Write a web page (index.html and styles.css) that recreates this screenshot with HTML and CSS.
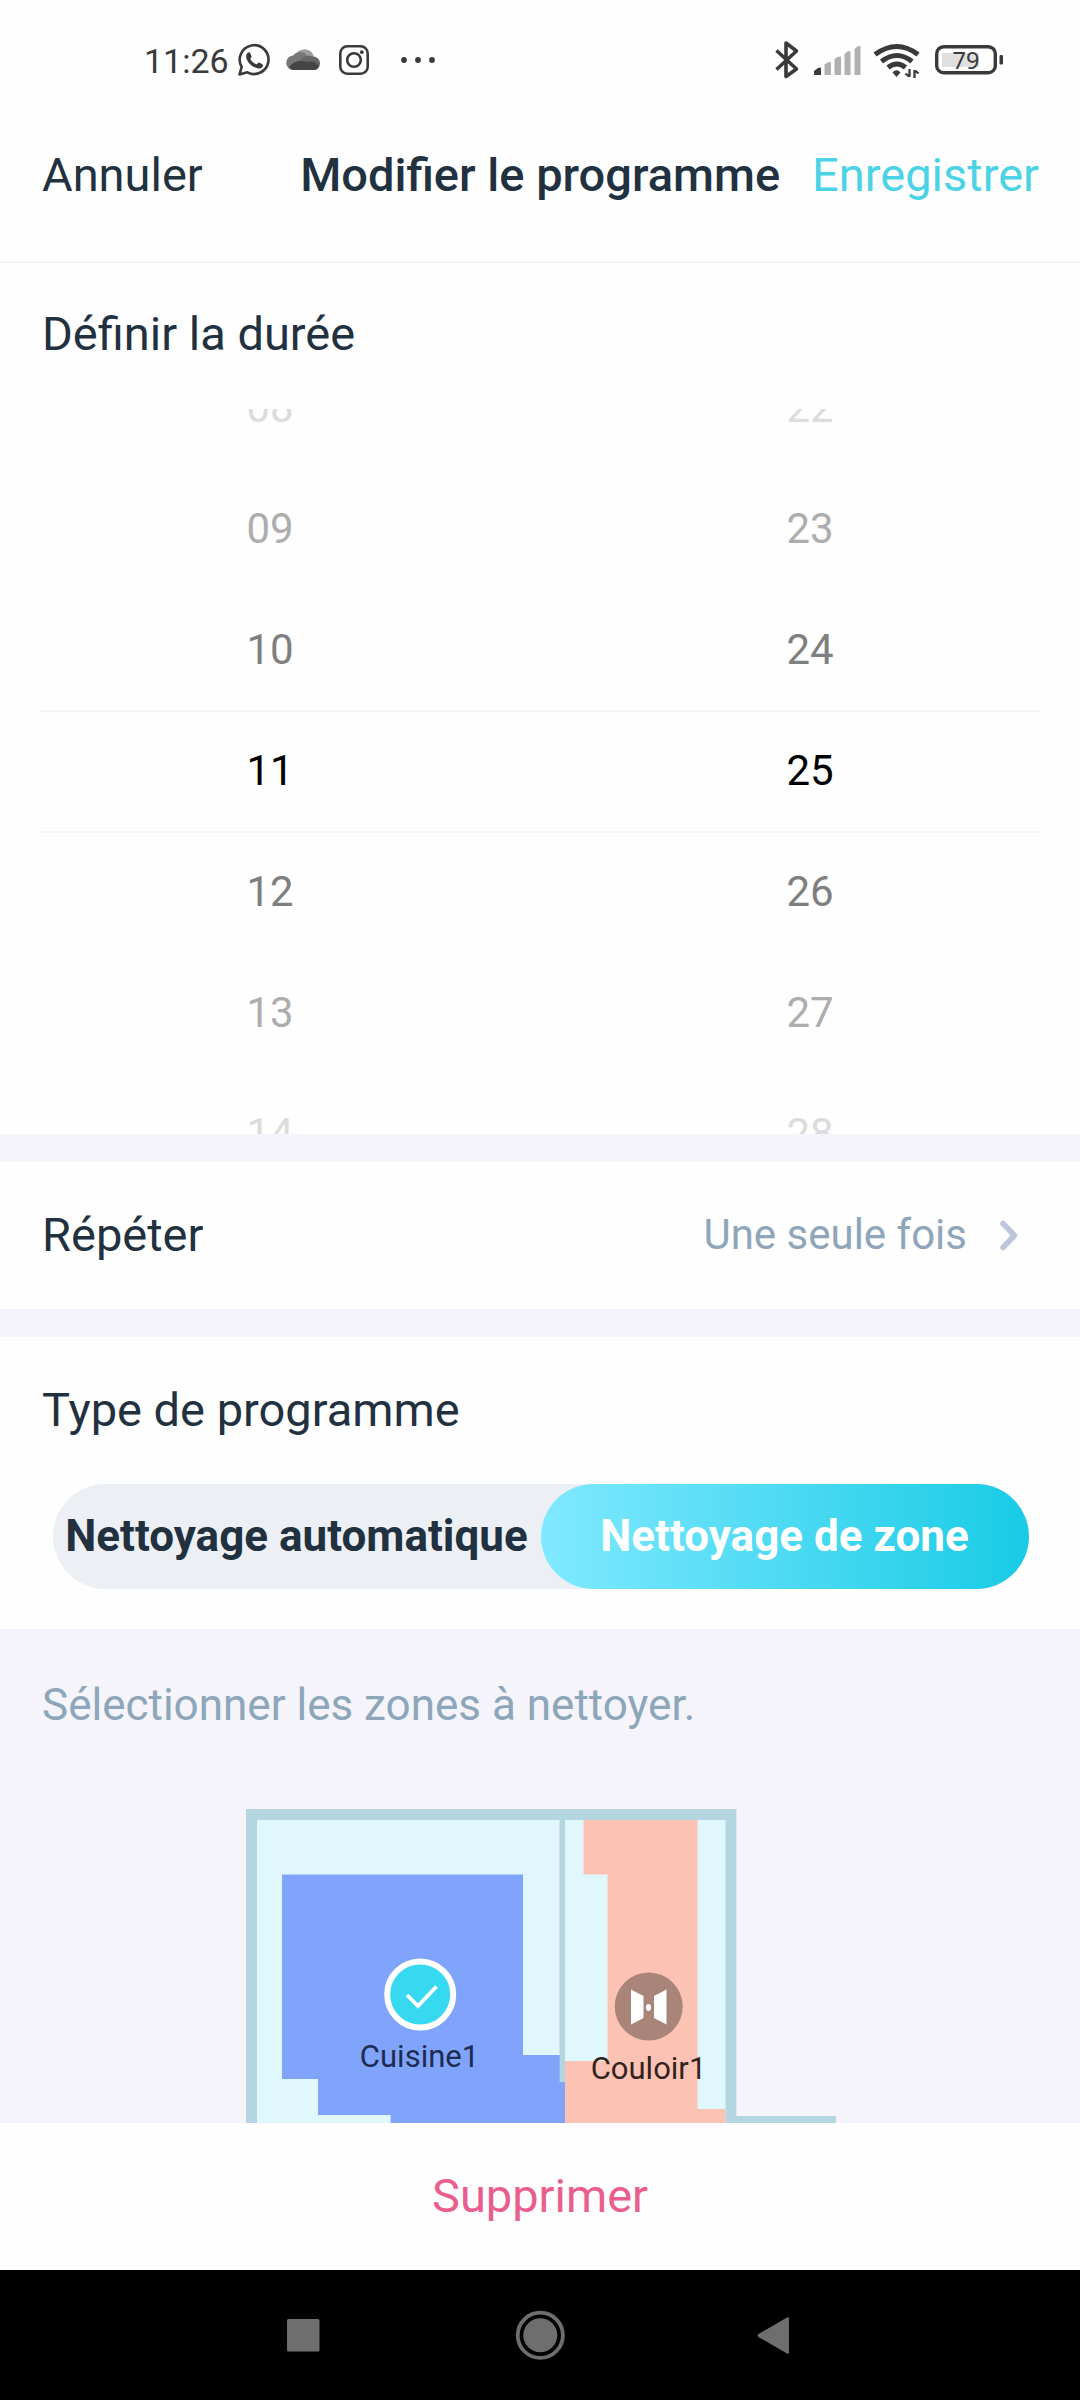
FILE: index.html
```html
<!DOCTYPE html>
<html lang="fr">
<head>
<meta charset="utf-8">
<title>Modifier le programme</title>
<link rel="stylesheet" href="styles.css">
</head>
<body>
<div class="screen">
  <div class="status">
    <span class="clock">11:26</span>
    <svg class="status-left" width="210" height="48" viewBox="230 36 210 48">
      <g fill="none" stroke="#3a3a3a" stroke-width="2.6">
        <path d="M239.5 74.5l2.2-7.6a14.4 14.4 0 1 1 5.600 5.400z" stroke-linejoin="round"/>
        <rect x="340.300" y="46.300" width="27.400" height="27.400" rx="7"/>
        <circle cx="354" cy="60" r="6.800"/>
      </g>
      <path d="M247 53.500c1-1.600 2.800-1.400 3.300-.2l1.200 3c.3 1-1.400 2.300-1 3 1.500 2.600 3.300 4 5.700 5 .9.300 2-2 2.900-1.700l3.200 1.600c1.400.8.400 3-1 3.700-2 1-4.500.6-7.400-.9-3.500-1.800-6-5-7.100-7.500-.9-2.100-.9-4.300.2-6z" fill="#3a3a3a"/>
      <circle cx="361.800" cy="52.200" r="1.900" fill="#3a3a3a"/>
      <circle cx="304.500" cy="59" r="9.800" fill="#9c9c9c"/>
      <path d="M294 70a7.300 7.300 0 0 1-1-14.600 9 9 0 0 1 13-1l9 15.600z" fill="#777"/>
      <path d="M300 60a11 11 0 0 1 13-3.500 7 7 0 0 1 7 7 6.500 6.500 0 0 1-6 6.500z" fill="#666"/>
      <path d="M289 67q8-9 17-5 9-2 13 4-1 4-6 4H294q-4 0-5-3z" fill="#454545"/>
      <g fill="#3a3a3a"><circle cx="404" cy="60" r="2.900"/><circle cx="418" cy="60" r="2.900"/><circle cx="432" cy="60" r="2.900"/></g>
    </svg>
    <svg class="status-right" width="240" height="48" viewBox="770 36 240 48">
      <path d="M776.500 50.500l20 18.500-10.500 7.500V43l10.500 8-20 18.500" fill="none" stroke="#3a3a3a" stroke-width="3.600" stroke-linejoin="round"/>
      <path d="M814 75v-4l4-3 3-.5V75z" fill="#3a3a3a"/>
      <path d="M824.500 75V64.500l3-2 3.500-.5v13zM834.500 75V59l3-2 3.500-.5V75zM844.500 75V54l3-2.500 3-.5v24zM854.500 75V49l3-2.500 3-.5v29z" fill="#b0b0b0"/>
      <g fill="none" stroke="#3a3a3a" stroke-width="5">
        <path d="M875 54.500q22-16 43 0"/><path d="M881.500 61.500q15.500-12 30.500 0"/><path d="M888 67.500q9-7 17.500 0"/>
      </g>
      <path d="M892.500 72.500q4-4.500 8 0l-4 4.500z" fill="#3a3a3a"/>
      <path d="M909.500 69v8M909 76.500l-3.500-3M914.500 78v-8M915 70.500l3.500 3" fill="none" stroke="#3a3a3a" stroke-width="2.300"/>
      <rect x="942" y="53" width="37" height="14" fill="#e0e0e0"/>
      <rect x="936.700" y="46.700" width="58.600" height="26" rx="7" fill="none" stroke="#3a3a3a" stroke-width="3.400"/>
      <rect x="999.500" y="55" width="3.500" height="9.500" rx="1.200" fill="#3a3a3a"/>
      <text class="battery" x="966" y="68.500" text-anchor="middle">79</text>
    </svg>
  </div>

  <header class="header">
    <span class="cancel">Annuler</span>
    <h1 class="title">Modifier le programme</h1>
    <span class="save">Enregistrer</span>
  </header>

  <section class="duration">
    <h2 class="label">Définir la durée</h2>
    <div class="picker">
      <div class="wheel">
        <span class="far">08</span><span class="mid">09</span><span class="near">10</span><span class="now">11</span><span class="near">12</span><span class="mid">13</span><span class="far">14</span>
      </div>
      <div class="wheel">
        <span class="far">22</span><span class="mid">23</span><span class="near">24</span><span class="now">25</span><span class="near">26</span><span class="mid">27</span><span class="far">28</span>
      </div>
      <div class="selection"></div>
    </div>
  </section>

  <section class="repeat">
    <span>Répéter</span>
    <span class="value">Une seule fois</span>
    <svg class="chevron" width="24" height="34" viewBox="0 0 24 34"><path d="M4 5.500l11.500 12L4 29.500" fill="none" stroke="#bcc6da" stroke-width="5.500" stroke-linecap="round" stroke-linejoin="round"/></svg>
  </section>

  <section class="type">
    <h2 class="label">Type de programme</h2>
    <div class="segmented">
      <span class="option">Nettoyage automatique</span>
      <span class="option active">Nettoyage de zone</span>
    </div>
  </section>

  <section class="zones">
    <p class="hint">Sélectionner les zones à nettoyer.</p>
    <svg class="map" width="1080" height="314" viewBox="0 1809 1080 314">
      <path fill="#b3d6e0" d="M246 1809h490.300v307H836v7H246z"/>
      <path fill="#e0f7fe" d="M257 1820h468.500v303H257z"/>
      <path fill="#b3d6e0" d="M559.500 1820h5.500v262h-5.500z"/>
      <path fill="#80a3fb" d="M282 1874.500h241v180.500h36.700v27h5.300v41H390.600v-8H318v-36H282z"/>
      <path fill="#fcc3b4" d="M583.500 1820H697.500v289h28v14H565v-62h42.500v-186.500h-24z"/>
      <circle cx="420.200" cy="1994.500" r="33" fill="#37d9f1" stroke="#fff" stroke-width="6"/>
      <path d="M407 1995l11 11 18.500-19.500" fill="none" stroke="#fff" stroke-width="3.800"/>
      <circle cx="648.700" cy="2006.500" r="34" fill="#a98479"/>
      <path fill="#fff" d="M631 1989.500l12.500 6.500v22L631 2024.500zM666.500 1989.500L654 1996v22l12.500 6.500z"/>
      <ellipse cx="648.500" cy="2007.500" rx="2.600" ry="3.400" fill="#fff"/>
      <text class="room" x="419.500" y="2067" text-anchor="middle" fill="#1d2c50">Cuisine1</text>
      <text class="room" x="648.500" y="2079" text-anchor="middle" fill="#33231f">Couloir1</text>
    </svg>
  </section>

  <footer class="delete">Supprimer</footer>

  <nav class="navbar">
    <svg width="1080" height="130" viewBox="0 2270 1080 130">
      <g fill="#6e6e6e">
        <rect x="287" y="2319" width="32.500" height="32.500" rx="1.500"/>
        <circle cx="540.300" cy="2335.300" r="17"/>
        <path d="M758.500 2334l28.500-16.500q2-1 2 1v34q0 2-2 1l-28.500-16.500q-2-1.500 0-3z"/>
      </g>
      <circle cx="540.300" cy="2335.300" r="22.600" fill="none" stroke="#6e6e6e" stroke-width="3.800"/>
    </svg>
  </nav>
</div>
</body>
</html>
```
FILE: styles.css
```css
* { box-sizing: border-box; }

body {
  margin: 0;
  background: #fff;
  font-family: Roboto, "Liberation Sans", sans-serif;
  color: #22313f;
}

.screen {
  width: 1080px;
  height: 2400px;
  display: flex;
  flex-direction: column;
  overflow: hidden;
  background: #fefefe;
  font-size: 47px;
}

.screen svg { display: block; flex: none; }

.status {
  height: 120px;
  padding: 0 70px 0 144px;
  display: flex;
  align-items: center;
}

.clock {
  width: 86px;
  font-size: 34px;
  line-height: 40px;
  padding-top: 2px;
  color: #3a3a3a;
  white-space: nowrap;
}

.status-right { margin-left: auto; }

.battery {
  font-family: "Noto Sans", sans-serif;
  font-size: 23.5px;
  fill: #3a3a3a;
}

.header {
  height: 143px;
  padding: 0 41px 33px 42px;
  border-bottom: 2px solid #f4f4f4;
  display: flex;
  align-items: center;
  white-space: nowrap;
}

.title {
  margin: 0 0 0 auto;
  font-size: 47px;
  font-weight: 500;
}

.save {
  margin-left: 32px;
  color: #4bd3e5;
}

.label {
  margin: 0;
  font-size: 47px;
  font-weight: 400;
}

.duration {
  height: 871px;
  display: flex;
  flex-direction: column;
}

.duration .label {
  height: 146px;
  padding: 0 42px;
  line-height: 141px;
}

.picker {
  position: relative;
  height: 725px;
  padding-bottom: 3px;
  display: flex;
  align-items: center;
  overflow: hidden;
}

.wheel {
  flex: 1;
  display: flex;
  flex-direction: column;
  font-size: 42px;
  line-height: 121px;
  text-align: center;
}

.now { color: #000; }
.near { color: #7f7f7f; }
.mid { color: #adadad; }
.far { color: #dcdcdc; }

/* Hairlines framing the selected row */
.selection {
  position: absolute;
  left: 40px;
  right: 40px;
  top: 301px;
  height: 123px;
  border-top: 2px solid #f4f4f4;
  border-bottom: 2px solid #f4f4f4;
}

.repeat {
  height: 203px;
  padding: 0 57px 2px 42px;
  border-top: 28px solid #f4f4fa;
  border-bottom: 28px solid #f4f4fa;
  display: flex;
  align-items: center;
}

.value {
  margin: 0 32px 0 auto;
  font-size: 42px;
  color: #8fa5ba;
}

.type { height: 292px; }

.type .label {
  height: 147px;
  padding: 0 42px;
  line-height: 146px;
}

.segmented {
  height: 105px;
  margin: 0 51px 0 53px;
  border-radius: 53px;
  background: #ecf0f5;
  display: flex;
}

.option {
  flex: 1 0 0;
  padding-right: 1px;
  border-radius: 53px;
  font-size: 44px;
  font-weight: 700;
  line-height: 104px;
  text-align: center;
  white-space: nowrap;
}

.active {
  color: #fff;
  background: linear-gradient(90deg, #80e9ff, #19cbe6);
}

.zones {
  height: 494px;
  background: #f4f4fa;
}

.hint {
  height: 180px;
  margin: 0;
  padding: 0 42px;
  line-height: 152px;
  font-size: 44px;
  color: #8da6ba;
}

.room { font-size: 31px; }

.delete {
  height: 147px;
  line-height: 145px;
  text-align: center;
  color: #e95e8e;
}

.navbar {
  height: 130px;
  background: #000;
}
```
